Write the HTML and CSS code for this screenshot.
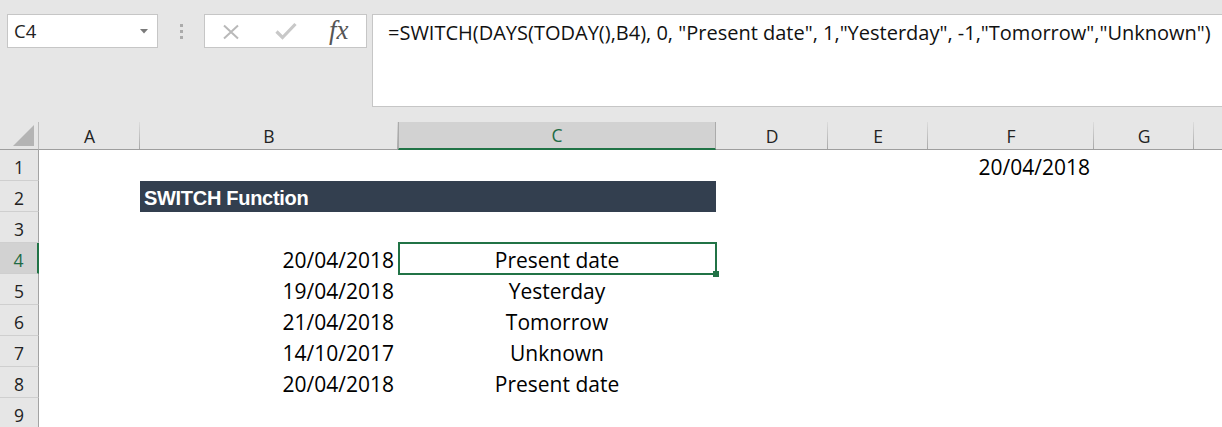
FILE: index.html
```html
<!DOCTYPE html>
<html>
<head>
<meta charset="utf-8">
<link rel="stylesheet" href="styles.css">
</head>
<body>
<div class="app">
  <div class="topbar">
    <div class="namebox">
      <span class="name">C4</span>
      <svg class="dd" width="8" height="5" viewBox="0 0 8 5"><path d="M0 0h8L4 4.5z" fill="#7a7a7a"/></svg>
    </div>
    <div class="grip"><i></i><i></i><i></i></div>
    <div class="fxbox">
      <svg class="ico-x" width="18" height="16" viewBox="0 0 18 16"><path d="M2 1.5L16 14.5M16 1.5L2 14.5" stroke="#b9b9b9" stroke-width="2" fill="none"/></svg>
      <svg class="ico-ok" width="22" height="18" viewBox="0 0 22 18"><path d="M1.5 9.5L7.5 15.5L20.5 2" stroke="#c8c8c8" stroke-width="3.2" fill="none"/></svg>
      <span class="fx">fx</span>
    </div>
    <div class="formula">=SWITCH(DAYS(TODAY(),B4), 0, "Present date", 1,"Yesterday", -1,"Tomorrow","Unknown")</div>
  </div>

  <div class="sheet">
    <div class="corner"><svg width="22" height="22" viewBox="0 0 22 22"><path d="M21 0V21H0z" fill="#b4b4b4"/></svg></div>
    <div class="ch">A</div>
    <div class="ch">B</div>
    <div class="ch sel">C</div>
    <div class="ch">D</div>
    <div class="ch">E</div>
    <div class="ch">F</div>
    <div class="ch">G</div>
    <div class="ch last"></div>

    <div class="rh">1</div><div></div><div></div><div></div><div></div><div></div><div class="cell r">20/04/2018</div><div></div><div></div>
    <div class="rh">2</div><div></div><div class="title span2">SWITCH Function</div><div></div><div></div><div></div><div></div><div></div>
    <div class="rh">3</div><div></div><div></div><div></div><div></div><div></div><div></div><div></div><div></div>
    <div class="rh sel">4</div><div></div><div class="cell r">20/04/2018</div><div class="cell c active">Present date<span class="selbox"></span><span class="handle"></span></div><div></div><div></div><div></div><div></div><div></div>
    <div class="rh">5</div><div></div><div class="cell r">19/04/2018</div><div class="cell c">Yesterday</div><div></div><div></div><div></div><div></div><div></div>
    <div class="rh">6</div><div></div><div class="cell r">21/04/2018</div><div class="cell c">Tomorrow</div><div></div><div></div><div></div><div></div><div></div>
    <div class="rh">7</div><div></div><div class="cell r">14/10/2017</div><div class="cell c">Unknown</div><div></div><div></div><div></div><div></div><div></div>
    <div class="rh">8</div><div></div><div class="cell r">20/04/2018</div><div class="cell c">Present date</div><div></div><div></div><div></div><div></div><div></div>
    <div class="rh">9</div><div></div><div></div><div></div><div></div><div></div><div></div><div></div><div></div>
  </div>
</div>
</body>
</html>
```
FILE: styles.css
```css
* { box-sizing: border-box; }
html, body { margin: 0; padding: 0; }
body {
  width: 1222px;
  height: 427px;
  overflow: hidden;
  background: #ffffff;
  font-family: "Open Sans", "Noto Sans", sans-serif;
  color: #000;
}
.app { width: 1222px; }

.topbar {
  height: 122px;
  background: #e6e6e6;
  display: flex;
  align-items: flex-start;
  padding: 14px 0 0 7px;
}
.namebox {
  width: 151px;
  height: 34px;
  background: #fff;
  border: 1px solid #c6c6c6;
  display: flex;
  align-items: center;
  justify-content: space-between;
  padding: 0 9px 0 6px;
}
.name {
  font-size: 18.5px;
  color: #222;
  line-height: 1;
  margin-top: 1px;
}
.dd { margin-top: 1px; }
.grip {
  width: 46px;
  height: 34px;
  display: flex;
  flex-direction: column;
  align-items: center;
  justify-content: center;
  gap: 3px;
  padding-top: 1px;
}
.grip i {
  display: block;
  width: 3px;
  height: 3px;
  background: #ababab;
}
.fxbox {
  width: 163px;
  height: 34px;
  background: #fff;
  border: 1px solid #c6c6c6;
  display: flex;
  align-items: center;
  padding-left: 17px;
}
.ico-x { margin-top: 1px; }
.ico-ok { margin-left: 35px; margin-top: -1px; }
.fx {
  margin-left: 32px;
  font-family: "Liberation Serif", "DejaVu Serif", serif;
  font-style: italic;
  font-size: 27px;
  color: #555;
  line-height: 1;
  margin-top: -1px;
}
.formula {
  flex: 1;
  margin-left: 5px;
  height: 93px;
  background: #fff;
  border: 1px solid #c6c6c6;
  border-right: none;
  padding: 5px 0 0 15px;
  font-size: 20px;
  line-height: 26px;
  color: #111;
  white-space: nowrap;
}

.sheet {
  display: grid;
  grid-template-columns: 39px 101px 258px 318px 112px 100px 166px 100px 28px;
  grid-template-rows: 28px repeat(9, 31px);
}
.corner {
  background: #e6e6e6;
  border-right: 1px solid #bcbcbc;
  border-bottom: 1px solid #9e9e9e;
  display: flex;
  align-items: flex-end;
  justify-content: flex-end;
  padding: 0 3px 2px 0;
}
.ch {
  background: linear-gradient(#dcdcdc, #a8a8a8) right / 1px 100% no-repeat, #e6e6e6;
  border-bottom: 1px solid #9e9e9e;
  text-align: center;
  font-size: 17.5px;
  line-height: 28px;
  color: #222;
}
.ch.last { background: #e6e6e6; }
.ch.sel {
  background: #d2d2d2;
  border-left: 1px solid #ababab;
  border-right: 1px solid #ababab;
  border-bottom: 2px solid #217346;
  color: #1e6b44;
  line-height: 27px;
}
.rh {
  background: #e6e6e6;
  border-right: 1px solid #a3a3a3;
  border-bottom: 1px solid #cfcfcf;
  text-align: center;
  font-size: 17.5px;
  line-height: 26px;
  padding-top: 4px;
  color: #222;
}
.rh.sel {
  background: #d2d2d2;
  border-right: 2px solid #217346;
  color: #1e6b44;
}
.cell {
  font-size: 21px;
  line-height: 26px;
  padding-top: 4px;
  white-space: nowrap;
}
.cell.r { text-align: right; padding-right: 4px; }
.cell.c { text-align: center; }
.active { position: relative; }
.selbox {
  position: absolute;
  left: 0;
  top: -1px;
  right: -1px;
  bottom: -1px;
  border: 2px solid #217346;
}
.handle {
  position: absolute;
  right: -3px;
  bottom: -3px;
  width: 6px;
  height: 6px;
  background: #217346;
}
.title {
  grid-column: span 2;
  background: #333f4f;
  color: #fff;
  font-family: "Liberation Sans", Arial, sans-serif;
  font-weight: bold;
  font-size: 20px;
  letter-spacing: -0.3px;
  line-height: 26px;
  padding: 4px 0 0 4px;
}
```
